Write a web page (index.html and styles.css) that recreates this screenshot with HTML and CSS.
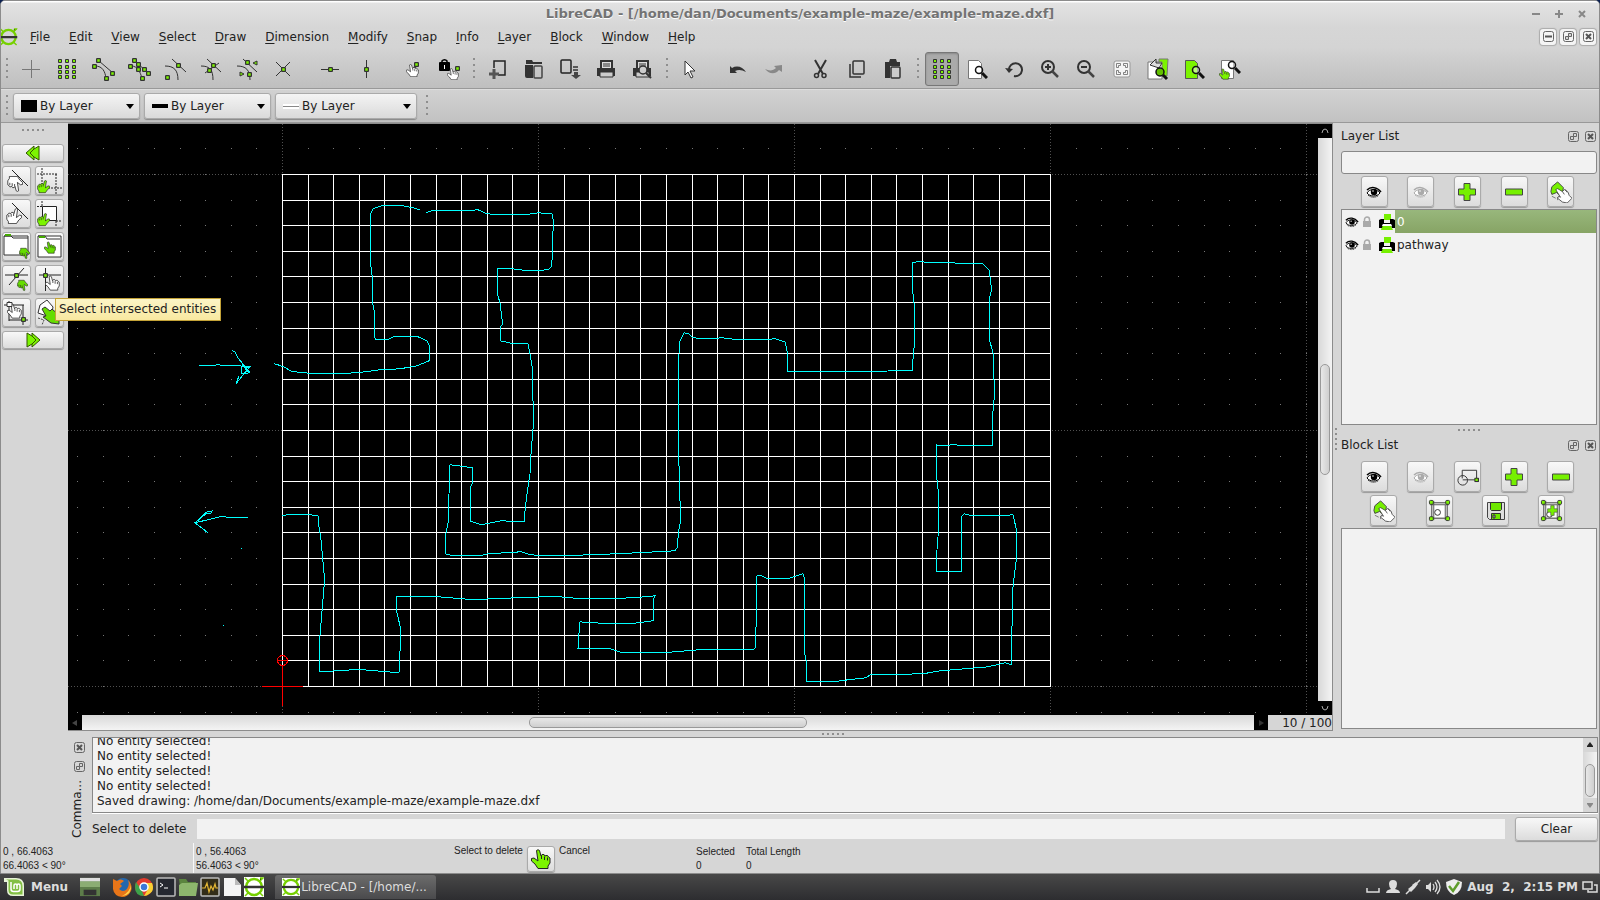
FILE: index.html
```html
<!DOCTYPE html>
<html lang="en">
<head>
	<meta charset="UTF-8">
	<meta name="viewport" content="width=device-width, initial-scale=1.0">
	<title>LibreCAD - [/home/dan/Documents/example-maze/example-maze.dxf]</title>
	<link rel="stylesheet" href="styles.css">
</head>
<body>
	<!-- Shared icons -->
	<svg class="sprite" aria-hidden="true">
		<symbol id="hand" viewBox="0 0 20 20"><path d="M5.500 1.500q1.500-1.500 3 0L10 7l1-1.500h2l1 1.500 1-.5h1.500l1 1.500 1.500 1v5l-2 3v2.500H7L4 15 .5 12V9.500L3 9l4 3z" stroke="#222"/><path d="M10.500 7v3M13.500 7.500V11M16.500 8.500v3" stroke="#222" fill="none"/></symbol>
		<symbol id="node" viewBox="0 0 4 4"><rect x=".5" y=".5" width="3" height="3" rx=".4" fill="#7cf400" stroke="#333"/></symbol>
		<symbol id="dots" viewBox="0 0 24 24"><g fill="#7cf400" stroke="#333"><path d="M3.500 2.500h3v3h-3zM10.500 2.500h3v3h-3zM17.500 2.500h3v3h-3zM3.500 8.500h3v3h-3zM10.500 8.500h3v3h-3zM17.500 8.500h3v3h-3zM3.500 13.500h3v3h-3zM10.500 13.500h3v3h-3zM17.500 13.500h3v3h-3zM3.500 18.500h3v3h-3zM10.500 18.500h3v3h-3zM17.500 18.500h3v3h-3z"/></g></symbol>
		<symbol id="lens" viewBox="0 0 14 14"><circle cx="5" cy="5" r="3.500" fill="#fff" fill-opacity=".5" stroke="#111" stroke-width="1.500"/><path d="M8 8l5 5" stroke="#111" stroke-width="3"/></symbol>
		<symbol id="eye" viewBox="0 0 16 12"><path d="M1 7c2-4 9-5 13 0-3 4-10 4-13 0z" fill="#fff" stroke="currentColor"/><path d="M1 4c4-4 10-3 14 2" fill="none" stroke="currentColor" stroke-width="1.500"/><circle cx="8" cy="6" r="3.200" fill="currentColor"/><path d="M2 9c3 3 8 3 11 0" fill="none" stroke="currentColor" stroke-dasharray="1 1"/><circle cx="7" cy="5" r=".8" fill="#fff"/></symbol>
		<symbol id="plus" viewBox="0 0 20 20"><path d="M7 1.500h6v5.500h5.500v6H13v5.500H7V13H1.500V7H7z" fill="#76f000" stroke="#444"/></symbol>
		<symbol id="minus" viewBox="0 0 20 20"><path d="M1.500 7h17v6h-17z" fill="#76f000" stroke="#444"/></symbol>
		<symbol id="modify" viewBox="0 0 24 24"><path d="M2 12L3 7l6-5 6 6-1 6-4 1-2-2-5 2z" fill="#76f000" stroke="#444"/><path d="M3 17l4 2m2-1v3" stroke="#777" fill="none"/><path d="M7 10l2-1 5 3 2-2 2 1 2 2 1 3 3 3-5 5-5-1-5-4 1-2 2 1z" fill="#fff" stroke="#333" stroke-width=".8"/><path d="M14 12l2 3m1-5l2 3" stroke="#333" stroke-width=".8"/></symbol>
		<symbol id="float" viewBox="0 0 11 11"><rect x=".5" y=".5" width="10" height="10" rx="2" fill="none" stroke="#666"/><path d="M5.500 2.500h3v3h-3zM2.500 5.500h3v3h-3z" fill="#d6d6d6" stroke="#666"/></symbol>
		<symbol id="close" viewBox="0 0 11 11"><rect x=".5" y=".5" width="10" height="10" rx="2" fill="none" stroke="#666"/><path d="M3 3l5 5m0-5L3 8" stroke="#555" stroke-width="2"/></symbol>
		<symbol id="shrink" viewBox="0 0 11 11"><rect x=".5" y=".5" width="10" height="10" rx="2" fill="none" stroke="#666"/><path d="M2 5.500h7" stroke="#555" stroke-width="2"/></symbol>
		<symbol id="lock" viewBox="0 0 10 12"><path d="M2.500 5V3.500a2.500 2.500 0 0 1 5 0V5" fill="none" stroke="currentColor" stroke-width="1.500"/><rect x="1" y="5" width="8" height="6" fill="currentColor"/></symbol>
		<symbol id="printer" viewBox="0 0 16 16"><path d="M5 0h7v6H5zM3 12h9l2 4H2z" fill="#76f000"/><path d="M0 6l2-1h3v4h6V5h3l2 1v8h-3l-1-4H4l-1 4H0z" fill="#000"/><path d="M4 10h8l1 2H3z" fill="#fff"/></symbol>
		<symbol id="arrow-up" viewBox="0 0 8 6"><path d="M4 0l3 4v1H1V4z" fill="currentColor"/></symbol>
		<symbol id="frame" viewBox="0 0 24 24"><path d="M4 4h16v16H4z" fill="#fff" stroke="#333"/><path d="M2 6h20M6 2v20M18 6v16" stroke="#555" fill="none"/><g fill="#7cf400" stroke="#333"><rect x="1.500" y="1.500" width="4" height="4" rx="1"/><rect x="18.500" y="1.500" width="4" height="4" rx="1"/><rect x="1.500" y="18.500" width="4" height="4" rx="1"/><rect x="18.500" y="18.500" width="4" height="4" rx="1"/></g></symbol>
		<symbol id="cad" viewBox="0 0 20 20"><circle cx="10" cy="10" r="8" fill="none" stroke="#76d000" stroke-width="2.500"/><path d="M0 10h20" stroke="#333" stroke-width="2.500"/><path d="M1 1l3 3m12-3l3 0-3 3M1 19l3-3m15 3l-3-3" stroke="#76d000" stroke-width="1.500"/></symbol>
	</svg>

	<div class="window">
		<header class="chrome">
			<div class="titlebar">
				<h1>LibreCAD - [/home/dan/Documents/example-maze/example-maze.dxf]</h1>
				<div class="window-buttons">
					<button aria-label="Minimize"><svg viewBox="0 0 10 10"><path d="M1 5h8"/></svg></button>
					<button aria-label="Maximize"><svg viewBox="0 0 10 10"><path d="M1 5h8M5 1v8"/></svg></button>
					<button aria-label="Close"><svg viewBox="0 0 10 10"><path d="M2 2l6 6m0-6L2 8"/></svg></button>
				</div>
			</div>
			<nav class="menubar">
				<svg class="menubar-logo" viewBox="0 0 18 20"><use href="#cad" x="-2" y="1" width="18" height="18"/></svg>
				<button><u>F</u>ile</button>
				<button><u>E</u>dit</button>
				<button><u>V</u>iew</button>
				<button><u>S</u>elect</button>
				<button><u>D</u>raw</button>
				<button><u>D</u>imension</button>
				<button><u>M</u>odify</button>
				<button><u>S</u>nap</button>
				<button><u>I</u>nfo</button>
				<button><u>L</u>ayer</button>
				<button><u>B</u>lock</button>
				<button><u>W</u>indow</button>
				<button><u>H</u>elp</button>
				<div class="mdi-buttons">
					<button aria-label="Minimize drawing"><svg><use href="#shrink"/></svg></button>
					<button aria-label="Restore drawing"><svg><use href="#float"/></svg></button>
					<button aria-label="Close drawing"><svg><use href="#close"/></svg></button>
				</div>
			</nav>
			<div class="toolbar">
				<span class="grip"></span>
				<button aria-label="Free snap"><svg viewBox="0 0 24 24"><path d="M3 12.500h18M12.500 3v18" stroke="#777"/></svg></button>
				<button aria-label="Snap on grid"><svg><use href="#dots"/></svg></button>
				<button aria-label="Snap on endpoints"><svg viewBox="0 0 24 24"><path d="M4 9c8 0 10 6 11 12M8 4l14 12" fill="none" stroke="#333"/><use href="#node" x="1" y="7" width="5" height="5"/><use href="#node" x="5" y="1" width="5" height="5"/><use href="#node" x="19" y="14" width="5" height="5"/><use href="#node" x="13" y="19" width="5" height="5"/></svg></button>
				<button aria-label="Snap on entity"><svg viewBox="0 0 24 24"><path d="M4 9c7 0 9 6 11 12M7 4l15 12" fill="none" stroke="#333"/><use href="#node" x="1" y="7" width="5" height="5"/><use href="#node" x="5" y="1" width="5" height="5"/><use href="#node" x="9" y="5" width="5" height="5"/><use href="#node" x="9" y="10" width="5" height="5"/><use href="#node" x="15" y="10" width="5" height="5"/><use href="#node" x="19" y="14" width="5" height="5"/><use href="#node" x="13" y="19" width="5" height="5"/></svg></button>
				<button aria-label="Snap center"><svg viewBox="0 0 24 24"><path d="M2 9c9 0 13 4 13 14M9 2l14 13" fill="none" stroke="#333"/><use href="#node" x="13" y="6" width="5" height="5"/><use href="#node" x="2" y="18" width="5" height="5"/></svg></button>
				<button aria-label="Snap middle"><svg viewBox="0 0 24 24"><path d="M2 9c9 0 12 4 12 14M8 2l14 13M20 6L6 16" fill="none" stroke="#333"/><use href="#node" x="12" y="6" width="5" height="5"/><use href="#node" x="8" y="11" width="5" height="5"/></svg></button>
				<button aria-label="Snap distance"><svg viewBox="0 0 24 24"><path d="M2 9c9 0 13 4 13 14M8 2l14 13" fill="none" stroke="#333"/><use href="#node" x="10" y="3" width="5" height="5"/><use href="#node" x="12" y="15" width="5" height="5"/><path d="M18 6l4-2v4zM5 15v4l4-2z" fill="#7cf400" stroke="#333"/></svg></button>
				<button aria-label="Snap intersection"><svg viewBox="0 0 24 24"><path d="M5 5l14 14M19 5L5 19" stroke="#333"/><use href="#node" x="10" y="10" width="5" height="5"/></svg></button>
				<span class="gap"></span>
				<button aria-label="Restrict horizontal"><svg viewBox="0 0 24 24"><path d="M3 12.500h18" stroke="#333"/><use href="#node" x="10" y="10" width="5" height="5"/></svg></button>
				<button aria-label="Restrict vertical"><svg viewBox="0 0 24 24"><path d="M12.500 3v18" stroke="#333"/><use href="#node" x="10" y="10" width="5" height="5"/></svg></button>
				<span class="gap"></span>
				<button aria-label="Set relative zero"><svg viewBox="0 0 24 24"><path d="M12 12l4-4" stroke="#333" stroke-width="2"/><use href="#hand" x="5" y="7" width="13" height="13" fill="#fff"/><use href="#node" x="13" y="5" width="5" height="5"/></svg></button>
				<button aria-label="Lock relative zero"><svg viewBox="0 0 24 24"><path d="M5 6V4a3 3 0 0 1 5 0v2" fill="none" stroke="#000" stroke-width="1.500"/><rect x="2" y="5" width="11" height="9" rx="1"/><path d="M7.500 8v4" stroke="#fff"/><use href="#hand" x="10" y="11" width="12" height="12" fill="#fff"/><use href="#node" x="18" y="9" width="5" height="5"/></svg></button>
				<span class="grip"></span>
				<button aria-label="New"><svg viewBox="0 0 24 24"><path d="M8 11V4h11v14h-7" fill="none" stroke="#222" stroke-width="1.500"/><path d="M3 17h10M8 12v10" stroke="#555" stroke-width="3"/></svg></button>
				<button aria-label="Open"><svg viewBox="0 0 24 24"><path d="M4 3h6l1 2h9v2H4zM3 8h8v13H5q-2 0-2-2z" fill="#333"/><rect x="12" y="9" width="8" height="12" rx="1" fill="none" stroke="#444" stroke-width="1.500"/></svg></button>
				<button aria-label="Save"><svg viewBox="0 0 24 24"><rect x="3" y="3" width="10" height="13" rx="1" fill="none" stroke="#222" stroke-width="1.500"/><path d="M15 10h5M15 13h5" stroke="#333" stroke-width="1.500"/><path d="M16 15h4v3h3l-5 4-5-4h3z" fill="#444"/></svg></button>
				<button aria-label="Print"><svg viewBox="0 0 24 24"><path d="M6 3h13v8h2v8H3v-8h3z" fill="#333"/><path d="M8 5h9v6H8z" fill="#ddd"/><path d="M9 7h7M9 9h7" stroke="#333"/><path d="M6 15h13v5H6z" fill="#ccc" stroke="#333"/></svg></button>
				<button aria-label="Print preview"><svg viewBox="0 0 24 24"><path d="M6 3h13v8h2v8H3v-8h3z" fill="#333"/><path d="M8 5h9v6H8z" fill="#ddd"/><path d="M9 7h7M9 9h7" stroke="#333"/><path d="M6 15h13v5H6z" fill="#ccc" stroke="#333"/><circle cx="13" cy="13" r="4" fill="#ccc" stroke="#333" stroke-width="1.500"/><path d="M16 16l5 5" stroke="#333" stroke-width="2"/></svg></button>
				<span class="grip"></span>
				<button aria-label="Selection pointer"><svg viewBox="0 0 24 24"><path d="M6 4v14l3-3 3 6 2-1-3-6h5z" fill="#fff" stroke="#333"/></svg></button>
				<span class="gap"></span>
				<button aria-label="Undo"><svg viewBox="0 0 24 24"><path d="M4 9v7h7l-2-2c4-2 7-1 11 1-3-5-9-7-14-4z" fill="#333"/></svg></button>
				<button aria-label="Redo"><svg viewBox="0 0 24 24"><path d="M20 8v7l-3-2c-4 5-10 4-14-1 4 2 8 2 11-1l-2-2z" fill="#888"/></svg></button>
				<span class="gap"></span>
				<button aria-label="Cut"><svg viewBox="0 0 24 24"><path d="M6 3l8 14M17 3L9 17" stroke="#333" stroke-width="2"/><circle cx="7.500" cy="18.500" r="2" fill="none" stroke="#333" stroke-width="1.500"/><circle cx="15" cy="18.500" r="2" fill="none" stroke="#333" stroke-width="1.500"/></svg></button>
				<button aria-label="Copy"><svg viewBox="0 0 24 24"><rect x="8" y="4" width="11" height="13" rx="1" fill="none" stroke="#333" stroke-width="1.500"/><path d="M5 7v13h11" fill="none" stroke="#333" stroke-width="1.500"/></svg></button>
				<button aria-label="Paste"><svg viewBox="0 0 24 24"><path d="M4 5h4l1-3h6l1 3h3v4H9v12H4z" fill="#333"/><rect x="10" y="10" width="9" height="11" rx="1" fill="#ccc" stroke="#333" stroke-width="1.500"/></svg></button>
				<span class="grip"></span>
				<button class="is-on" aria-label="Grid"><svg><use href="#dots"/></svg></button>
				<button aria-label="Draft"><svg viewBox="0 0 24 24"><path d="M2.500 3.500h10l3 3v15h-13z" fill="#fff" stroke="#777"/><use href="#lens" x="8" y="8" width="14" height="14"/></svg></button>
				<button aria-label="Redraw"><svg viewBox="0 0 24 24"><path d="M7 13a6.500 6.500 0 1 1 5 6" fill="none" stroke="#333" stroke-width="2"/><path d="M3 11l8 1-4 4z" fill="#333"/></svg></button>
				<button aria-label="Zoom in"><svg viewBox="0 0 24 24"><circle cx="10" cy="10" r="6" fill="none" stroke="#333" stroke-width="2"/><path d="M14 14l6 6" stroke="#444" stroke-width="2.500"/><path d="M7 10h6M10 7v6" stroke="#333" stroke-width="2"/></svg></button>
				<button aria-label="Zoom out"><svg viewBox="0 0 24 24"><circle cx="10" cy="10" r="6" fill="none" stroke="#333" stroke-width="2"/><path d="M14 14l6 6" stroke="#444" stroke-width="2.500"/><path d="M7 10h6" stroke="#333" stroke-width="2"/></svg></button>
				<button aria-label="Auto zoom"><svg viewBox="0 0 24 24"><rect x="4" y="4" width="16" height="16" rx="2" fill="#f4f4f4" stroke="#999"/><path d="M10.500 6.500h-4v4h2v-2h2zM13.500 6.500h4v4h-2v-2h-2zM10.500 17.500h-4v-4h2v2h2zM13.500 17.500h4v-4h-2v2h-2z" fill="none" stroke="#666" stroke-width=".8"/></svg></button>
				<button aria-label="Previous view"><svg viewBox="0 0 24 24"><path d="M13 2h9l-1 17h-8z" fill="#7cf400" stroke="#777"/><path d="M2 5h14v17H2z" fill="#fff" stroke="#777"/><path d="M4 8l6-6v4h6l-3 5z" fill="#ddd" stroke="#333"/><circle cx="14" cy="15" r="4" fill="#62c000" stroke="#111" stroke-width="1.500"/><path d="M17 18l4 4" stroke="#111" stroke-width="3"/></svg></button>
				<button aria-label="Window zoom"><svg viewBox="0 0 24 24"><path d="M3.500 3.500h9l3 3v15h-12z" fill="#7cf400" stroke="#555"/><use href="#lens" x="9" y="8" width="14" height="14"/></svg></button>
				<button aria-label="Zoom panning"><svg viewBox="0 0 24 24"><path d="M3.500 3.500h12v18h-12z" fill="#fff" stroke="#777"/><use href="#hand" x="1" y="11" width="11" height="12" fill="#7cf400"/><use href="#lens" x="9" y="3" width="14" height="14"/></svg></button>
			</div>
			<div class="penbar">
				<span class="grip"></span>
				<label class="combo"><span class="swatch swatch-color"></span><select aria-label="Color"><option>By Layer</option></select><svg viewBox="0 0 8 5"><path d="M0 0h8L4 5z"/></svg></label>
				<label class="combo"><span class="swatch swatch-width"></span><select aria-label="Line width"><option>By Layer</option></select><svg viewBox="0 0 8 5"><path d="M0 0h8L4 5z"/></svg></label>
				<label class="combo combo-wide"><span class="swatch swatch-type"></span><select aria-label="Line type"><option>By Layer</option></select><svg viewBox="0 0 8 5"><path d="M0 0h8L4 5z"/></svg></label>
				<span class="grip"></span>
			</div>
		</header>

		<main class="workspace">
			<aside class="select-tools">
				<span class="grip-row"></span>
				<button class="wide" aria-label="Back"><svg viewBox="0 0 16 16"><path d="M9 1v3l5-3v14l-5-3v3L1 8z" fill="#7cf400" stroke="#335500"/><path d="M9 4L5 8l4 4" fill="none" stroke="#335500"/></svg></button>
				<button aria-label="Select entity"><svg viewBox="0 0 27 27"><path d="M9 3l16 16" stroke="#222"/><g transform="matrix(-1 0 0 -1 20 25)"><use href="#hand" width="16" height="16" fill="#fff"/></g></svg></button>
				<button aria-label="Select window"><svg viewBox="0 0 27 27"><path d="M6 1v24M20 7v20M1 7h20M6 21h20" stroke="#222" stroke-dasharray="2 1"/><g transform="matrix(-1 0 0 1 14 12)"><use href="#hand" width="13" height="15" fill="#7cf400"/></g></svg></button>
				<button aria-label="Deselect entity"><svg viewBox="0 0 27 27"><path d="M9 3l16 16" stroke="#222"/><g transform="matrix(-1 0 0 1 19 8)"><use href="#hand" width="16" height="16" fill="#fff"/></g></svg></button>
				<button aria-label="Deselect window"><svg viewBox="0 0 27 27"><path d="M6.500 6.500h14v14h-14z" fill="#fff" stroke="#222"/><path d="M6 1v6M1 6.500h6M20 21v6M20 21h6" stroke="#222" stroke-dasharray="2 1"/><g transform="matrix(-1 0 0 1 14 12)"><use href="#hand" width="13" height="15" fill="#7cf400"/></g></svg></button>
				<button aria-label="Select contour"><svg viewBox="0 0 27 27"><path d="M1 3h24v19H1z" fill="#fff" stroke="#333"/><path d="M1 3h7l2 2h15" fill="none" stroke="#333"/><path d="M2 2h6" stroke="#4a0" stroke-width="2"/><g transform="matrix(-1 0 0 -1 27 27)"><use href="#hand" width="11" height="13" fill="#6d0"/></g></svg></button>
				<button aria-label="Select layer"><svg viewBox="0 0 27 27"><path d="M2 3h23v21H2z" fill="#fff" stroke="#333"/><path d="M2 3h7l2 3h13" fill="none" stroke="#333"/><path d="M3 4h6" stroke="#4a0" stroke-width="2"/><use href="#hand" x="8" y="8" width="12" height="13" fill="#6d0"/></svg></button>
				<button aria-label="Select intersected entities"><svg viewBox="0 0 27 27"><path d="M2 9h23M6 19L21 2" stroke="#222"/><use href="#node" x="11" y="7" width="5" height="5"/><g transform="matrix(-1 0 0 -1 25 26)"><use href="#hand" width="11" height="13" fill="#6d0"/></g></svg></button>
				<button aria-label="Deselect intersected entities"><svg viewBox="0 0 27 27"><path d="M3 9h22M9.500 2v23" stroke="#222"/><use href="#hand" x="9" y="9" width="15" height="16" fill="#fff"/><use href="#node" x="7" y="7" width="5" height="5"/></svg></button>
				<button aria-label="Select all"><svg viewBox="0 0 27 27"><path d="M6 2v20M20 6v20M1 6h20M6 21h19" stroke="#222"/><use href="#hand" x="4" y="4" width="15" height="16" fill="#fff"/><path d="M4 3.500h5v4H4z" fill="#fff" stroke="#333"/><use href="#node" x="18" y="18" width="5" height="5"/></svg></button>
				<button aria-label="Invert selection"><svg viewBox="0 0 27 27"><path d="M2 14l2-8 7-5 6 7-1 5-5 4z" fill="#fff" stroke="#333"/><path d="M6 10l3-2 5 4 2-2 7 6v9l-8-1-8-6 3-1z" fill="#6d0" stroke="#333"/><path d="M2 19l6 2-2 5" fill="none" stroke="#444" stroke-dasharray="2 1"/></svg></button>
				<button class="wide" aria-label="Forward"><svg viewBox="0 0 16 16"><path d="M7 1v3L2 1v14l5-3v3l8-7z" fill="#7cf400" stroke="#335500"/><path d="M7 4l4 4-4 4" fill="none" stroke="#335500"/></svg></button>
				<div class="tooltip" role="tooltip">Select intersected entities</div>
			</aside>

			<section class="drawing">
				<svg class="view" role="img" aria-label="Maze drawing">
					<g transform="translate(-68 -124)" fill="none">
						<path id="grid-dots" stroke="#777"/>
						<path id="grid-meta" stroke="#505050" stroke-dasharray="1 2"/>
						<path id="maze-cells" stroke="#fff"/>
						<g stroke="#0ff" transform="translate(0 -.2)">
							<path d="M274 364l4 1 8 3 4 3 12 2 25 1 30-1 23-3 20-1 17-3 12-5v-16l-2-4-9-4h-25l-5 3h-12l-2-3v-27l-2-10v-25l-2-15v-45l3-6 9-3h21l10 2 7 2"/>
							<path d="M426 213l6-2h30l16-1 9 4 13 1h25l13-2 14 1 2 11-2 12v23l-1 7-3 3-20 1-16-2h-15v24l3 10 2 16v6l-2 3v13l14 3h14l2 10 2 12 1 35v28l-2 25-1 20-3 20-2 17-1 11-23-1-15 3-5 1-6-2-5-2v-33l2-4v-16l-6-1-16-2-1 29-1 30-3 14v16l8 2h27l8-2 33-2 9 3 20 1 42-1 44-2 39-2 2-3 2-19 1-5v-23l-1-35-1-25v-35l1-52 1-13 4-8 5 1 4 4 14 1 15-1 16 2h24l13-1 10 3 2 9v21h9l116-1 2-23 1-9-1-5v-31l-2-17v-23l5-1 36 1 9 1h21l6 6 2 15v7l-2 8 1 42 3 11 1 27v20l-2 22v24h-13l-27-1-9 1-7-1v17l1 18 2 19-1 38-2 26v9h25v-55l3-3 9 2h26l14-1 3 13v34l-3 25-1 40-1 10v20l1 8-7-2-17 4-23 2-25 2-17 3-53 1-4 3-18 2-15 2h-27v-22l-2-10v-47l0-26-1-3-15 5h-21l-5-3h-5l-1 7v44l-1 22-3 1h-54l-35 3h-41l-12-4h-32l1-16 1-11 10 1 40 1 23-3v-21l2-4-22 2-33 1h-18l-22-2h-16l-54 2-16 1-35-3h-43v12l5 21-2 43-35-3h-12l-32 2-1-24 5-61v-14l-3-33-2-13-1-11-8-1h-23l-5 1"/>
							<path d="M199 366h10l9-1 9 1h13l9 2M232 351l3 1 3 6 12 15-9 1 1-8 8 1-6 7-8 10 3-8M238 358l11 15-7-8"/>
							<path d="M248 518l-28-1-25 6 13 10M213 511l-6 1-12 11 11-9 6-1M241 549h1M223 626h1"/>
						</g>
						<g stroke="#f00"><path d="M262 686.500h41M282.500 666v40M277 660.500h11"/><circle cx="282.500" cy="660.500" r="5"/></g>
					</g>
				</svg>
				<div class="scrollbar scrollbar-v">
					<button aria-label="Scroll up"><svg viewBox="0 0 8 6"><path d="M1 5l1-3 2-1 2 1 1 3" fill="none" stroke="#aaa"/></svg></button>
					<span class="track"></span><span class="thumb"></span><span class="track"></span>
					<button aria-label="Scroll down"><svg viewBox="0 0 8 6"><path d="M1 1l1 3 2 1 2-1 1-3" fill="none" stroke="#aaa"/></svg></button>
				</div>
				<div class="drawing-foot">
					<div class="scrollbar scrollbar-h">
						<button aria-label="Scroll left"><svg viewBox="0 0 8 6"><path d="M6 0v6L1 3z" fill="#444"/></svg></button>
						<span class="track"></span><span class="thumb"></span><span class="track"></span>
						<button aria-label="Scroll right"><svg viewBox="0 0 8 6"><path d="M2 0v6l5-3z" fill="#333"/></svg></button>
					</div>
					<span class="grid-scale">10 / 100</span>
				</div>
			</section>

			<aside class="docks">
				<span class="grip-column"></span>
				<section class="dock">
					<header class="dock-title">
						<h2>Layer List</h2>
						<button aria-label="Float layer list"><svg><use href="#float"/></svg></button>
						<button aria-label="Close layer list"><svg><use href="#close"/></svg></button>
					</header>
					<input class="filter" type="text" aria-label="Filter layers">
					<div class="dock-buttons">
						<button aria-label="Show all layers"><svg class="icon-eye"><use href="#eye"/></svg></button>
						<button aria-label="Hide all layers"><svg class="icon-eye is-dim"><use href="#eye"/></svg></button>
						<button aria-label="Add layer"><svg><use href="#plus"/></svg></button>
						<button aria-label="Remove layer"><svg><use href="#minus"/></svg></button>
						<button aria-label="Modify layer"><svg class="icon-large"><use href="#modify"/></svg></button>
					</div>
					<div class="list">
						<table class="layers">
							<tr class="is-selected"><td><svg class="icon-eye"><use href="#eye"/></svg></td><td><svg class="icon-lock"><use href="#lock"/></svg></td><td><svg class="icon-printer"><use href="#printer"/></svg></td><td class="layer-name">0</td></tr>
							<tr><td><svg class="icon-eye"><use href="#eye"/></svg></td><td><svg class="icon-lock"><use href="#lock"/></svg></td><td><svg class="icon-printer"><use href="#printer"/></svg></td><td class="layer-name">pathway</td></tr>
						</table>
					</div>
				</section>
				<span class="grip-row"></span>
				<section class="dock">
					<header class="dock-title">
						<h2>Block List</h2>
						<button aria-label="Float block list"><svg><use href="#float"/></svg></button>
						<button aria-label="Close block list"><svg><use href="#close"/></svg></button>
					</header>
					<div class="dock-buttons">
						<button aria-label="Show all blocks"><svg class="icon-eye"><use href="#eye"/></svg></button>
						<button aria-label="Hide all blocks"><svg class="icon-eye is-dim"><use href="#eye"/></svg></button>
						<button aria-label="Create block"><svg class="icon-large" viewBox="0 0 24 24"><path d="M6.500 14V5.500h15v10H7" fill="none" stroke="#333"/><circle cx="7" cy="16" r="5" fill="none" stroke="#333"/><use href="#node" x="19" y="13" width="5" height="5"/></svg></button>
						<button aria-label="Add block"><svg><use href="#plus"/></svg></button>
						<button aria-label="Remove block"><svg><use href="#minus"/></svg></button>
					</div>
					<div class="dock-buttons">
						<button aria-label="Rename block"><svg class="icon-large"><use href="#modify"/></svg></button>
						<button aria-label="Edit block"><svg class="icon-large" viewBox="0 0 24 24"><use href="#frame"/><circle cx="10" cy="14" r="3" fill="#fff" stroke="#333"/></svg></button>
						<button aria-label="Save block"><svg viewBox="0 0 20 20"><path d="M1.500 1.500h17v17h-15l-2-2z" fill="#ddd" stroke="#444"/><path d="M4.500 1.500h11v7l-1 1h-9l-1-1zM5.500 12.500h9v6h-9z" fill="#6ee800" stroke="#333"/><path d="M7 14h2v3H7z" fill="#aaa" stroke="#333"/></svg></button>
						<button aria-label="Insert block"><svg class="icon-large" viewBox="0 0 24 24"><use href="#frame"/><circle cx="10" cy="16" r="3" fill="#fff" stroke="#333"/><use href="#plus" x="7" y="6" width="12" height="12"/></svg></button>
					</div>
					<div class="list"></div>
				</section>
			</aside>
		</main>

		<span class="grip-row grip-bottom"></span>

		<section class="command">
			<div class="command-title">
				<button aria-label="Close command line"><svg><use href="#close"/></svg></button>
				<button aria-label="Float command line"><svg><use href="#float"/></svg></button>
				<h2>Comma...</h2>
			</div>
			<div class="command-body">
				<div class="log">
					<div class="log-lines">
						<p>No entity selected!</p>
						<p>No entity selected!</p>
						<p>No entity selected!</p>
						<p>No entity selected!</p>
						<p>Saved drawing: /home/dan/Documents/example-maze/example-maze.dxf</p>
					</div>
					<div class="scrollbar scrollbar-v scrollbar-log">
						<button aria-label="Scroll log up"><svg><use href="#arrow-up"/></svg></button>
						<span class="track"></span><span class="thumb"></span><span class="track"></span>
						<button class="is-flipped" aria-label="Scroll log down"><svg><use href="#arrow-up"/></svg></button>
					</div>
				</div>
				<div class="prompt">
					<label for="command-input">Select to delete</label>
					<input id="command-input" type="text">
					<button>Clear</button>
				</div>
			</div>
		</section>

		<footer class="status">
			<div class="status-coords">0 , 66.4063<br>66.4063 &lt; 90°</div>
			<div class="status-coords">0 , 56.4063<br>56.4063 &lt; 90°</div>
			<div class="status-mouse">
				<span>Select to delete</span>
				<button aria-label="Mouse hint"><svg viewBox="0 0 20 20"><use href="#hand" fill="#7cf400"/></svg></button>
				<span>Cancel</span>
			</div>
			<div class="status-total">Selected<br>0</div>
			<div class="status-total">Total Length<br>0</div>
		</footer>
	</div>

	<div class="panel">
		<button class="panel-menu"><svg viewBox="0 0 20 20"><path d="M0 1h12q8 0 8 8v10H9q-6 0-6-6V5H0z" fill="#e8f4d8"/><path d="M2 2.500h10q6.500 0 6.500 6.500v8.500H9q-4.500 0-4.500-4.500V3.500z" fill="#83bf45"/><path d="M7 5v7q0 2.500 2.500 2.500h4q2.500 0 2.500-2.500V9q0-2-1.500-2T13 9v3M13 9q0-2-1.500-2T10 9v3" fill="none" stroke="#fff" stroke-width="1.500"/></svg>Menu</button>
		<div class="launchers">
			<button class="launcher-desktop" aria-label="Show desktop"><svg viewBox="0 0 22 20"><path d="M0 0h22v20H0z" fill="#5d7d4a"/><path d="M0 0h22v4H0z" fill="#dedede"/><path d="M0 4h22v6H0z" fill="#8bad73"/><path d="M4 13h14v6H4z" fill="#333"/></svg></button>
			<button aria-label="Firefox"><svg viewBox="0 0 20 20"><circle cx="11" cy="9" r="8" fill="#2467ad"/><path d="M1 2l4 2q4-3 7 0l-4 3 2 2-3 3q4 4 8 0 3-4 1-9 5 5 3 11-3 6-9 6Q2 19 1 12z" fill="#e87518"/><path d="M19 8q1 10-9 11 8-4 9-11z" fill="#ffd34a"/></svg></button>
			<button aria-label="Chrome"><svg viewBox="0 0 20 20"><circle cx="10" cy="10" r="9" fill="#e33b2e"/><path d="M2 5l6 9 2 5Q1 19 1 10q0-3 1-5z" fill="#3da34a"/><path d="M10 6h8q3 8-3 11-2 2-5 2l4-7z" fill="#f8d033"/><circle cx="10" cy="10" r="4" fill="#3b78d8" stroke="#fff" stroke-width="1.500"/></svg></button>
			<button aria-label="Terminal"><svg viewBox="0 0 20 20"><rect x="1" y="1" width="18" height="18" rx="1" fill="#252830" stroke="#bbb" stroke-width="1.500"/><path d="M4 6l3 2-3 2M8 11h4" fill="none" stroke="#fff"/></svg></button>
			<button aria-label="Files"><svg viewBox="0 0 20 20"><path d="M1 2h7l2 3h8v12H3z" fill="#5b853f"/><path d="M4 6h16l-2 13H1V8z" fill="#8db66d"/></svg></button>
			<button aria-label="System monitor"><svg viewBox="0 0 20 20"><rect x="1" y="1" width="18" height="18" rx="1" fill="#322c18" stroke="#bbb" stroke-width="1.500"/><path d="M2 11h3l2-5 2 9 2-6 2 4 2-6 1 4h2" fill="none" stroke="#e4b634" stroke-width="1.200"/></svg></button>
			<button aria-label="LibreOffice"><svg viewBox="0 0 20 20"><path d="M2 1h11l6 7v11H2z" fill="#f4f4f4"/><path d="M13 1l6 7h-6z" fill="#bbb"/></svg></button>
			<button aria-label="LibreCAD"><svg viewBox="0 0 20 20"><rect width="20" height="20" fill="#fff"/><use href="#cad"/></svg></button>
		</div>
		<button class="task"><svg viewBox="0 0 20 20"><rect width="20" height="20" fill="#fff"/><use href="#cad"/></svg>LibreCAD - [/home/...</button>
		<div class="tray">
			<svg viewBox="0 0 16 16"><path d="M2 9v4h12V9" fill="none" stroke="#ddd" stroke-width="1.500"/></svg>
			<svg viewBox="0 0 16 16"><path d="M8 1q4 0 4 4 0 3-2 5 5 1 5 4H1q0-3 5-4-2-2-2-5 0-4 4-4z" fill="#ddd"/></svg>
			<svg viewBox="0 0 16 16"><path d="M1 15l4-4M11 5l4-4" stroke="#ddd" stroke-width="1.500"/><path d="M3 10l5-4 2 3-4 4zM7 6l4-3 2 2-3 4z" fill="#ddd"/></svg>
			<svg viewBox="0 0 16 16"><path d="M1 6h2l3-3v10l-3-3H1z" fill="#ddd"/><path d="M8 5q2 3 0 6M10 3q4 5 0 10M12 1q6 7 0 14" fill="none" stroke="#ddd" stroke-width="1.300"/></svg>
			<svg class="tray-shield" viewBox="0 0 18 18"><path d="M9 1l8 3q0 10-8 13Q1 14 1 4z" fill="#eee"/><path d="M4 8l4 5 6-9" fill="none" stroke="#5f9d2c" stroke-width="2.500"/></svg>
			<time class="clock">Aug  2,  2:15 PM</time>
			<svg viewBox="0 0 16 16"><rect x="1" y="3" width="9" height="7" fill="none" stroke="#ddd" stroke-width="1.500"/><path d="M12 6h3v7H6v-2" fill="none" stroke="#ddd" stroke-width="1.500"/></svg>
		</div>
	</div>

	<script src="script.js"></script>
</body>
</html>
```

FILE: styles.css
```css
* {
	margin: 0;
	padding: 0;
	box-sizing: border-box;
}
:root {
	--face: #d6d6d6;
	--base: #f2f2f2;
	--line: #8c8c8c;
	--text: #222;
}
body {
	height: 100vh;
	display: flex;
	flex-direction: column;
	overflow: hidden;
	background-color: #0b2050;
	color: var(--text);
	font: 12px/16px "DejaVu Sans", sans-serif;
}
button,
input,
select {
	font: inherit;
	color: inherit;
	border: none;
	background: none;
}
button {
	display: flex;
	flex-shrink: 0;
	align-items: center;
	justify-content: center;
}
h1,
h2 {
	font-size: 12px;
	font-weight: normal;
}
svg {
	display: block;
}
.sprite {
	position: absolute;
	width: 0;
	height: 0;
}
.window {
	flex: 1;
	min-height: 0;
	display: flex;
	flex-direction: column;
	border: 1px solid var(--line);
	border-radius: 5px 5px 0 0;
	background-color: var(--face);
}

/* Title, menu and toolbars */
.chrome {
	border-radius: 4px 4px 0 0;
	background: linear-gradient(#fff 1px, #e2e2e2 2px, #d6d6d6 26px, #d4d4d4 46px, #bfbfbf 87px, #bfbfbf);
}
.titlebar {
	height: 24px;
	display: flex;
	align-items: center;
	padding: 2px 12px 0 0;
}
.titlebar h1 {
	flex: 1;
	padding-left: 68px;
	text-align: center;
	font-size: 13px;
	font-weight: bold;
	color: #737373;
	text-shadow: 0 1px #fff;
}
.window-buttons {
	display: flex;
	gap: 13px;
}
.window-buttons svg {
	width: 10px;
	height: 10px;
	stroke: #888;
	stroke-width: 2;
}
.menubar {
	height: 23px;
	display: flex;
	align-items: center;
}
.menubar-logo {
	width: 19px;
	height: 20px;
}
.menubar > button {
	display: block;
	padding: 0 9px 0 10px;
}
.menubar u {
	text-underline-offset: 2px;
}
.mdi-buttons {
	display: flex;
	gap: 4px;
	margin-left: auto;
	padding-right: 3px;
}
.mdi-buttons button {
	width: 16px;
	height: 16px;
	border-radius: 3px;
	background-color: #f4f4f4;
	box-shadow: 0 0 1px 1px #aaa;
}
.mdi-buttons svg,
.dock-title svg,
.command-title svg {
	width: 11px;
	height: 11px;
}
.toolbar {
	height: 41px;
	display: flex;
	align-items: center;
	gap: 2px;
	padding-top: 2px;
	border-bottom: 1px solid #999;
}
.toolbar button {
	width: 34px;
	height: 34px;
	border-radius: 3px;
}
.toolbar svg {
	width: 24px;
	height: 24px;
}
.toolbar .is-on {
	border: 1px solid #777;
	background-color: #aaa;
	box-shadow: inset 0 1px 2px #888;
}
.gap {
	flex: 0 0 9px;
}
.grip {
	flex: 0 0 11px;
	height: 25px;
	background: radial-gradient(circle at 6px 2px, #8e8e8e 1px, transparent 1px) 0 0 / 12px 6px;
}
.grip-row,
.grip-column {
	background: radial-gradient(circle at 2px 2px, #8e8e8e 1px, transparent 1px) 0 0 / 5px 5px;
}
.grip-row {
	align-self: center;
	flex-shrink: 0;
	width: 25px;
	height: 5px;
}
.penbar {
	height: 34px;
	display: flex;
	align-items: center;
	gap: 4px;
	border-top: 1px solid #ddd;
	border-bottom: 1px solid #999;
	background: linear-gradient(#d2d2d2, #c2c2c2);
}
.penbar .grip {
	flex-basis: 8px;
}
.combo {
	width: 127px;
	height: 26px;
	display: flex;
	align-items: center;
	gap: 3px;
	padding: 0 5px 0 7px;
	border: 1px solid #aaa;
	border-radius: 3px;
	background: linear-gradient(#f4f4f4, #dadada);
	box-shadow: 0 1px 1px #888;
}
.combo-wide {
	width: 142px;
}
.combo select {
	flex: 1;
	min-width: 0;
	appearance: none;
}
.combo svg {
	width: 8px;
	height: 5px;
}
.swatch {
	width: 16px;
	height: 12px;
	background-color: #000;
}
.swatch-width {
	height: 4px;
}
.swatch-type {
	height: 5px;
	border: solid #fff;
	border-width: 2px 0;
	background-color: #888;
}

/* Workspace */
.workspace {
	flex: 1;
	min-height: 0;
	display: flex;
}
.select-tools {
	position: relative;
	flex: 0 0 67px;
	display: grid;
	grid-template-columns: 29px 29px;
	grid-template-rows: 12px 18px;
	grid-auto-rows: 29px;
	align-content: start;
	gap: 4px;
	padding: 5px 1px;
}
.select-tools .grip-row {
	grid-column: span 2;
	justify-self: center;
	align-self: start;
}
.select-tools button,
.dock-buttons button,
.prompt button,
.status button {
	border: 1px solid #aaa;
	border-radius: 3px;
	background: linear-gradient(#f8f8f8, #dcdcdc);
	box-shadow: 0 1px 1px #999;
}
.select-tools svg {
	width: 27px;
	height: 27px;
}
.select-tools .wide {
	grid-column: span 2;
	height: 18px;
}
.select-tools .wide svg {
	width: 16px;
	height: 16px;
}
.tooltip {
	position: absolute;
	top: 175px;
	left: 54px;
	z-index: 1;
	padding: 2px 4px 3px 3px;
	border: 1px solid #c4a338;
	background: linear-gradient(#fcf5c6, #f8e8a0);
	white-space: nowrap;
}
.drawing {
	flex: 1;
	min-width: 0;
	display: grid;
	grid-template-columns: 1fr 14px;
	grid-template-rows: 1fr 15px;
	border: solid var(--line);
	border-width: 1px 1px 1px 0;
}
.view {
	width: 100%;
	height: 100%;
	overflow: hidden;
	background-color: #000;
	shape-rendering: crispEdges;
}
.drawing-foot {
	grid-column: span 2;
	display: flex;
}
.grid-scale {
	flex: 0 0 64px;
	text-align: right;
	line-height: 16px;
}
.scrollbar {
	display: flex;
	background: linear-gradient(90deg, #d8d8d8, #f4f4f4);
}
.scrollbar-v {
	flex-direction: column;
}
.scrollbar-h {
	flex: 1;
	background: linear-gradient(#d8d8d8, #f4f4f4);
}
.scrollbar button {
	flex: 0 0 14px;
	background-color: #000;
}
.scrollbar svg {
	width: 8px;
	height: 6px;
}
.track {
	flex: 226;
}
.scrollbar .thumb {
	flex: 110;
	margin: 0 2px;
	border: 1px solid #999;
	border-radius: 5px;
	background: linear-gradient(90deg, #e8e8e8, #cfcfcf);
}
.scrollbar-h .track {
	flex: 448;
}
.scrollbar-h .thumb {
	flex: 276;
	margin: 2px 0;
	background: linear-gradient(#e8e8e8, #cfcfcf);
}

/* Docks on the right */
.docks {
	position: relative;
	flex: 0 0 266px;
	display: flex;
	flex-direction: column;
	padding: 4px 2px 2px 8px;
}
.grip-column {
	position: absolute;
	top: 50%;
	left: 1px;
	width: 5px;
	height: 25px;
}
.dock {
	display: flex;
	flex-direction: column;
	flex: 301;
}
.dock + .grip-row {
	margin: 3px 0;
}
.dock:last-child {
	flex: 295;
}
.dock-title {
	display: flex;
	align-items: center;
	gap: 6px;
	height: 18px;
	margin-bottom: 6px;
	padding-right: 1px;
}
.dock-title h2 {
	flex: 1;
}
.filter {
	height: 23px;
	margin-bottom: 1px;
	border: 1px solid #888;
	border-radius: 3px;
	background-color: var(--base);
}
.dock-buttons {
	display: flex;
	justify-content: space-evenly;
	padding: 1px 3px 2px 0;
}
.dock-buttons button {
	width: 27px;
	height: 31px;
}
.dock-buttons svg {
	width: 20px;
	height: 20px;
}
.dock-buttons .icon-large {
	width: 23px;
	height: 23px;
}
.dock-buttons .icon-eye {
	width: 16px;
	height: 12px;
	color: #000;
}
.dock-buttons .is-dim {
	color: #aaa;
}
.list {
	flex: 1;
	border: 1px solid #888;
	background-color: var(--base);
}
.layers {
	width: 100%;
	border-collapse: collapse;
}
.layers td {
	height: 23px;
	width: 17px;
	padding-left: 3px;
}
.layers .layer-name {
	width: auto;
	padding-left: 2px;
}
.layers td:nth-child(3) {
	width: 19px;
}
.layers .is-selected .layer-name {
	color: #fff;
	background: linear-gradient(#98b77c, #87a465);
}
.layers .icon-eye {
	width: 14px;
	height: 12px;
	color: #000;
}
.layers .icon-lock {
	width: 10px;
	height: 12px;
	color: #aaa;
}
.layers .icon-printer {
	width: 16px;
	height: 16px;
}

/* Command line */
.grip-bottom {
	margin: 1px 0 0 66px;
}
.command {
	flex: 0 0 106px;
	display: flex;
	padding-right: 1px;
}
.command-title {
	flex: 0 0 91px;
	display: flex;
	flex-direction: column;
	align-items: flex-end;
	gap: 8px;
	padding: 5px 7px 0 0;
}
.command-title h2 {
	writing-mode: vertical-rl;
	transform: rotate(180deg);
}
.command-body {
	flex: 1;
	min-width: 0;
}
.log {
	height: 76px;
	display: flex;
	border: 1px solid #888;
	background-color: var(--base);
	box-shadow: 0 1px #fff;
}
.log-lines {
	flex: 1;
	display: flex;
	flex-direction: column;
	justify-content: flex-end;
	overflow: hidden;
	padding: 0 4px 3px;
	line-height: 15px;
}
.scrollbar-log {
	width: 14px;
	flex-shrink: 0;
}
.scrollbar-log button {
	background-color: var(--face);
}
.scrollbar-log .thumb {
	flex: 32;
}
.scrollbar-log .track {
	flex: 12;
}
.scrollbar-log .thumb + .track {
	flex: 1;
}
.is-flipped svg {
	transform: rotate(180deg);
	color: #888;
}
.prompt {
	display: flex;
	align-items: center;
	gap: 10px;
	padding-top: 4px;
}
.prompt input {
	flex: 1;
	height: 20px;
	background-color: var(--base);
}
.prompt button {
	width: 83px;
	height: 24px;
}

/* Status bar */
.status {
	flex: 0 0 30px;
	display: flex;
	font: 10px/14px "Liberation Sans", sans-serif;
}
.status-coords {
	width: 192px;
	padding: 2px 2px 0;
}
.status-coords + .status-coords {
	border-left: 1px solid #f8f8f8;
}
.status-mouse {
	flex: 0 0 311px;
	display: flex;
	gap: 4px;
	padding: 1px 0 0 69px;
}
.status button {
	width: 28px;
	height: 26px;
	margin-top: 2px;
}
.status svg {
	width: 20px;
	height: 20px;
}
.status-total {
	min-width: 50px;
	padding-top: 2px;
}

/* Desktop panel */
.panel {
	flex: 0 0 26px;
	display: flex;
	align-items: center;
	padding: 0 2px 0 4px;
	background: linear-gradient(#484848, #2d2d30);
	color: #ddd;
}
.panel svg {
	width: 20px;
	height: 20px;
}
.panel-menu {
	gap: 7px;
	margin-right: 12px;
	font-weight: bold;
}
.launchers {
	display: flex;
	gap: 2px;
}
.launchers .launcher-desktop {
	margin-right: 10px;
}
.task {
	width: 161px;
	height: 24px;
	justify-content: flex-start;
	gap: 1px;
	margin-left: 11px;
	padding-left: 7px;
	border-radius: 3px 3px 0 0;
	background: linear-gradient(#6c6c6c, #4a4a4c);
}
.task svg {
	width: 18px;
	height: 18px;
}
.tray {
	display: flex;
	align-items: center;
	gap: 4px;
	margin-left: auto;
}
.tray svg {
	width: 16px;
	height: 16px;
}
.tray .tray-shield {
	width: 18px;
	height: 18px;
}
.clock {
	font-weight: bold;
	white-space: pre;
}
```

FILE: script.js
```js
// Drawing grid: 10 units are 25.6px, every tenth line is a meta line
const step = 25.6;
const originX = 282;
const originY = 174;

const at = (origin, n) => Math.round(origin + n * step) + 0.5;

let dots = '';
for (let i = -8; i < 60; i++) {
	for (let j = -1; j < 40; j++) {
		dots += `M${at(originX, i) - 0.5} ${at(originY, j)}h1`;
	}
}
document.querySelector('#grid-dots').setAttribute('d', dots);

let meta = '';
for (let i = 0; i < 60; i += 10) {
	meta += `M${at(originX, i)} 124v1200`;
}
for (let j = 0; j < 40; j += 10) {
	meta += `M68 ${at(originY, j)}h2400`;
}
document.querySelector('#grid-meta').setAttribute('d', meta);

// Maze cells, 30 by 20
let cells = '';
for (let i = 0; i <= 30; i++) {
	cells += `M${at(originX, i)} 174v513`;
}
for (let j = 0; j <= 20; j++) {
	cells += `M282 ${at(originY, j)}h769`;
}
document.querySelector('#maze-cells').setAttribute('d', cells);
```
